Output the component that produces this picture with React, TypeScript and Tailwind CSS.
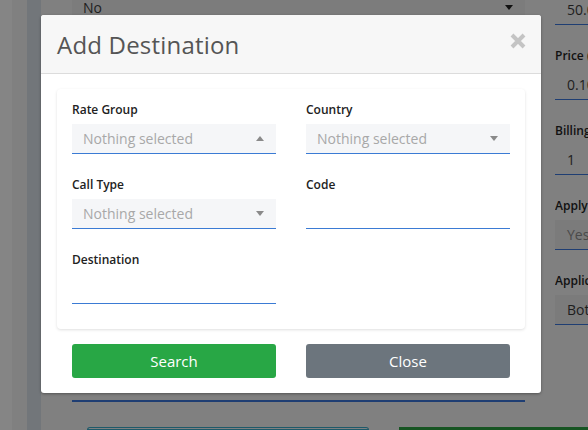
import React from 'react';

const Caret = ({ up = false, color = '#8a8a8a' }: { up?: boolean; color?: string }) => (
  <svg width="8" height="5" viewBox="0 0 8 5" className="shrink-0">
    {up ? <path d="M0 5 L4 0 L8 5 Z" fill={color} /> : <path d="M0 0 L8 0 L4 5 Z" fill={color} />}
  </svg>
);

const Label = ({ children }: { children: React.ReactNode }) => (
  <div className="h-[16px] mb-[6px] text-[12px] leading-[16px] font-semibold text-[#222]">{children}</div>
);

const Select = ({ up = false }: { up?: boolean }) => (
  <div className="h-[30px] bg-[#f5f6f8] border-b border-[#3b7bd4] flex items-center justify-between pl-[11px] pr-[12px]">
    <span className="text-[14px] text-[#a8a8a8]">Nothing selected</span>
    <Caret up={up} />
  </div>
);

const TextInput = () => <div className="h-[30px] border-b border-[#3b7bd4]" />;

function BgField({ label, value, select = false, first = false }: { label?: string; value: string; select?: boolean; first?: boolean }) {
  return (
    <div className={first ? '' : 'mt-[23px]'}>
      {label && <div className="h-[16px] mb-[6px] text-[12px] leading-[16px] font-semibold text-[#111] whitespace-nowrap">{label}</div>}
      <div
        className={`h-[30px] border-b border-[#1f3e73] flex items-center pl-[12px] text-[14px] whitespace-nowrap ${
          select ? 'bg-[#7b7b7b]' : ''
        } ${value === 'Yes' ? 'text-[#4a4a4a]' : 'text-[#1e1e1e]'}`}
      >
        {value}
      </div>
    </div>
  );
}

export default function App() {
  return (
    <div className="relative w-[588px] h-[430px] overflow-hidden bg-[#808080] font-['Open_Sans',sans-serif]">
      {/* page behind the dialog, already dimmed */}
      <div className="flex h-full">
        <div className="w-[12px] shrink-0 bg-[#858585]" />
        <div className="w-[15px] shrink-0 bg-[#808080]" />
        <div className="w-[14px] shrink-0 bg-[#72767a]" />
        <div className="flex-1 min-w-0 flex flex-col">
          <div className="h-[427px] shrink-0 flex">
            <div className="w-[31px] shrink-0" />
            <div className="w-[453px] shrink-0 flex flex-col">
              <div className="h-[25px] -mt-[5px] bg-[#7c7c7c] flex items-center justify-between pl-[11px] pr-[12px]">
                <span className="text-[14px] text-[#1e1e1e]">No</span>
                <Caret color="#111" />
              </div>
              <div className="h-[380px]" />
              <div className="h-[2px] bg-[#1f3e73]" />
            </div>
            <div className="w-[30px] shrink-0" />
            <div className="flex-1 min-w-0 overflow-hidden flex flex-col -mt-[5px]">
              <BgField value="50.00" first />
              <BgField label="Price (" value="0.10" />
              <BgField label="Billing" value="1" />
              <BgField label="Apply" value="Yes" select />
              <BgField label="Applic" value="Both" select />
            </div>
          </div>
          <div className="flex-1 flex">
            <div className="w-[46px] shrink-0" />
            <div className="w-[282px] shrink-0 border border-[#1e5a6a] rounded-t-[3px]" />
            <div className="w-[30px] shrink-0" />
            <div className="flex-1 bg-[#175523]" />
          </div>
        </div>
      </div>

      {/* dialog */}
      <div className="absolute left-[41px] top-[15px] w-[500px] h-[378px] bg-white rounded-[3px] shadow-[0_1px_3px_rgba(0,0,0,0.35)] flex flex-col">
        <div className="h-[59px] bg-[#f7f7f7] border-b border-[#dcdcdc] rounded-t-[3px] flex items-center justify-between pl-[16px] pr-[15px]">
          <h4 className="text-[24px] font-normal text-[#555] tracking-[0.2px] mt-[1px]">Add Destination</h4>
          <svg width="16" height="16" viewBox="0 0 16 16" className="-mt-[7px]">
            <path d="M2 2 L14 14 M14 2 L2 14" stroke="#c4c4c4" strokeWidth="4" />
          </svg>
        </div>
        <div className="px-[16px] pt-[15px]">
          <div className="rounded-[4px] bg-white shadow-[0_1px_3px_rgba(0,0,0,0.13)] px-[15px] pt-[13px] pb-[25px] grid grid-cols-2 gap-x-[30px] gap-y-[23px]">
            <div>
              <Label>Rate Group</Label>
              <Select up />
            </div>
            <div>
              <Label>Country</Label>
              <Select />
            </div>
            <div>
              <Label>Call Type</Label>
              <Select />
            </div>
            <div>
              <Label>Code</Label>
              <TextInput />
            </div>
            <div>
              <Label>Destination</Label>
              <TextInput />
            </div>
          </div>
          <div className="mt-[15px] px-[15px] grid grid-cols-2 gap-x-[30px]">
            <button className="h-[34px] rounded-[3px] bg-[#28a745] text-white text-[15px]">Search</button>
            <button className="h-[34px] rounded-[3px] bg-[#6c757d] text-white text-[15px]">Close</button>
          </div>
        </div>
      </div>
    </div>
  );
}
